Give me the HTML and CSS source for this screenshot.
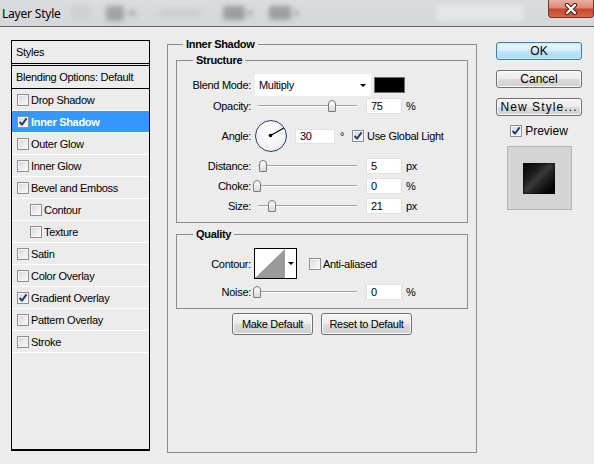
FILE: index.html
```html
<!DOCTYPE html>
<html>
<head>
<meta charset="utf-8">
<title>Layer Style</title>
<link rel="stylesheet" href="styles.css">
</head>
<body>
<div class="titlebar">
  <span class="title">Layer Style</span>
  <span class="blob b1"></span>
  <span class="blob b2"></span>
  <span class="blob b3"></span>
  <span class="blob b4"></span>
  <span class="blob b5"></span>
  <span class="blob b6"></span>
  <span class="blob b7"></span>
  <span class="blob b8"></span>
  <span class="blob b9"></span>
  <span class="close">
    <svg width="16" height="12" viewBox="0 0 16 12"><path d="M4 2 L12 10 M12 2 L4 10" stroke="#4a1c12" stroke-width="4.4" stroke-linecap="round"/><path d="M4 2 L12 10 M12 2 L4 10" stroke="#ffffff" stroke-width="2.4" stroke-linecap="round"/></svg>
  </span>
</div>

<div class="dialog">
  <div class="styles-panel">
    <div class="styles-head">Styles</div>
    <div class="styles-blend">Blending Options: Default</div>
    <ul class="style-list">
      <li class="style-item"><span class="cb"></span>Drop Shadow</li>
      <li class="style-item selected"><span class="cb"><svg class="tick" viewBox="0 0 10 10"><path d="M1.6 5 L4 7.6 L8.6 1.4" /></svg></span>Inner Shadow</li>
      <li class="style-item"><span class="cb"></span>Outer Glow</li>
      <li class="style-item"><span class="cb"></span>Inner Glow</li>
      <li class="style-item"><span class="cb"></span>Bevel and Emboss</li>
      <li class="style-item sub"><span class="cb"></span>Contour</li>
      <li class="style-item sub"><span class="cb"></span>Texture</li>
      <li class="style-item"><span class="cb"></span>Satin</li>
      <li class="style-item"><span class="cb"></span>Color Overlay</li>
      <li class="style-item"><span class="cb"><svg class="tick" viewBox="0 0 10 10"><path d="M1.6 5 L4 7.6 L8.6 1.4" /></svg></span>Gradient Overlay</li>
      <li class="style-item"><span class="cb"></span>Pattern Overlay</li>
      <li class="style-item"><span class="cb"></span>Stroke</li>
    </ul>
  </div>

  <fieldset class="group main-group">
    <legend>Inner Shadow</legend>

    <fieldset class="group sub-group">
      <legend>Structure</legend>

      <div class="row row-blend">
        <span class="lbl">Blend Mode:</span>
        <div class="select">Multiply<span class="caret"></span></div>
        <span class="swatch"></span>
      </div>

      <div class="row row-slider first">
        <span class="lbl">Opacity:</span>
        <div class="slider"><span class="thumb" style="left:75px"></span></div>
        <span class="field">75</span>
        <span class="unit">%</span>
      </div>

      <div class="row row-angle">
        <span class="lbl">Angle:</span>
        <div class="dial">
          <svg width="32" height="32" viewBox="0 0 32 32"><line x1="15.5" y1="15.5" x2="29" y2="8" stroke="#000" stroke-width="1.1"/><circle cx="15.5" cy="15.5" r="1.8" fill="#000"/></svg>
        </div>
        <span class="field field-angle">30</span>
        <span class="deg">°</span>
        <span class="cb"><svg class="tick" viewBox="0 0 10 10"><path d="M1.6 5 L4 7.6 L8.6 1.4" /></svg></span>
        <span class="cb-label">Use Global Light</span>
      </div>

      <div class="row row-slider gap5">
        <span class="lbl">Distance:</span>
        <div class="slider"><span class="thumb" style="left:6px"></span></div>
        <span class="field">5</span>
        <span class="unit">px</span>
      </div>

      <div class="row row-slider gap4">
        <span class="lbl">Choke:</span>
        <div class="slider"><span class="thumb" style="left:0px"></span></div>
        <span class="field">0</span>
        <span class="unit">%</span>
      </div>

      <div class="row row-slider gap4">
        <span class="lbl">Size:</span>
        <div class="slider"><span class="thumb" style="left:15px"></span></div>
        <span class="field">21</span>
        <span class="unit">px</span>
      </div>
    </fieldset>

    <fieldset class="group sub-group quality">
      <legend>Quality</legend>

      <div class="row row-contour">
        <span class="lbl">Contour:</span>
        <div class="contour">
          <svg class="curve" width="30" height="29" viewBox="0 0 30 29"><polygon points="0,29 30,0 30,29" fill="#9a9a9a"/></svg>
          <span class="contour-drop"><span class="caret"></span></span>
        </div>
        <span class="cb cb-aa"></span>
        <span class="cb-label">Anti-aliased</span>
      </div>

      <div class="row row-slider gap5">
        <span class="lbl">Noise:</span>
        <div class="slider"><span class="thumb" style="left:0px"></span></div>
        <span class="field">0</span>
        <span class="unit">%</span>
      </div>
    </fieldset>

    <div class="btn-row">
      <button class="btn btn-make">Make Default</button>
      <button class="btn btn-reset">Reset to Default</button>
    </div>
  </fieldset>

  <div class="side">
    <button class="btn btn-side btn-ok">OK</button>
    <button class="btn btn-side">Cancel</button>
    <button class="btn btn-side btn-new">New Style...</button>
    <div class="preview-toggle">
      <span class="cb"><svg class="tick" viewBox="0 0 10 10"><path d="M1.6 5 L4 7.6 L8.6 1.4" /></svg></span>
      <span class="preview-label">Preview</span>
    </div>
    <div class="preview-box"><span class="preview-swatch"></span></div>
  </div>
</div>
</body>
</html>
```

FILE: styles.css
```css
* { box-sizing: border-box; }

html, body { margin: 0; padding: 0; }

body {
  width: 594px;
  height: 464px;
  overflow: hidden;
  background: #ececec;
  font-family: "Liberation Sans", Arial, sans-serif;
  font-size: 11px;
  letter-spacing: -0.3px;
  color: #000;
}

/* ---------- title bar ---------- */
.titlebar {
  height: 27px;
  display: flex;
  align-items: center;
  background: linear-gradient(#d9dde0, #d3d7da);
  border-bottom: 1px solid #606366;
}

.title {
  flex: 0 0 68px;
  padding-left: 2px;
  font-family: "Noto Sans", "Liberation Sans", sans-serif;
  font-size: 12px;
  letter-spacing: -0.2px;
  color: #000;
}

.blob {
  display: block;
  height: 14px;
  border-radius: 3px;
  filter: blur(2.5px);
  background: #c7cbce;
}
.b1 { margin-left: 4px; width: 18px; background: #ccd0d3; }
.b2 { margin-left: 16px; width: 18px; height: 15px; background: #9fa3a6; }
.b3 { margin-left: 4px; width: 8px; height: 6px; background: #a9adb0; }
.b4 { margin-left: 24px; width: 40px; height: 8px; background: #c9cdd0; }
.b5 { margin-left: 23px; width: 22px; background: #9a9ea1; }
.b6 { margin-left: 2px; width: 6px; height: 6px; background: #a8acaf; }
.b7 { margin-left: 16px; width: 22px; background: #9a9ea1; }
.b8 { margin-left: 2px; width: 6px; height: 6px; background: #a8acaf; }
.b9 { margin-left: 137px; width: 88px; height: 17px; background: #e3e5e7; }

.close {
  margin-left: auto;
  align-self: flex-start;
  width: 46px;
  height: 18px;
  display: flex;
  align-items: center;
  justify-content: center;
  border: 1px solid #7b3426;
  border-top: none;
  border-radius: 0 0 4px 4px;
  background: linear-gradient(#eab0a2 0%, #de8a76 45%, #c9452b 55%, #d4674c 100%);
}

/* ---------- dialog ---------- */
.dialog {
  display: flex;
  align-items: flex-start;
}

/* styles list */
.styles-panel {
  margin: 13px 0 0 11px;
  width: 139px;
  height: 411px;
  border: 1px solid #000;
  border-bottom-width: 2px;
  background: #ececec;
}

.styles-head {
  height: 25px;
  line-height: 22px;
  padding-left: 4px;
  border-bottom: 3px double #000;
}

.styles-blend {
  height: 23px;
  line-height: 22px;
  padding-left: 4px;
  border-bottom: 1px solid #000;
}

.style-list {
  list-style: none;
  margin: 0;
  padding: 0;
}

.style-item {
  height: 22px;
  display: flex;
  align-items: center;
  padding-left: 5px;
  border-bottom: 1px solid #fff;
}
.style-item .cb { margin-right: 2px; }
.style-item.sub { padding-left: 18px; }
.style-item.selected {
  background: #3399ff;
  color: #fff;
  font-weight: bold;
}

/* checkbox */
.cb {
  flex: none;
  width: 12px;
  height: 12px;
  display: inline-flex;
  align-items: center;
  justify-content: center;
  border: 1px solid #8e8f8f;
  background: linear-gradient(135deg, #d2d4d7 0%, #eeeeee 60%, #fafafa 100%);
  box-shadow: inset 0 0 0 1px #f6f6f6;
}
.tick { width: 10px; height: 10px; }
.tick path {
  fill: none;
  stroke: #23357a;
  stroke-width: 1.9;
}

/* group boxes */
.group {
  margin: 0;
  padding: 0;
  min-width: 0;
  border: 1px solid #8c8c8c;
}
.group > legend {
  margin-left: 15px;
  padding: 0 3px;
  line-height: 13px;
  font-weight: bold;
}

.main-group {
  margin: 11px 0 0 17px;
  width: 310px;
  height: 415px;
}

.sub-group {
  margin: 3px 0 0 8px;
  width: 292px;
  padding: 7px 0 8px 0;
}
.sub-group > legend { margin-left: 16px; }
.quality { margin-top: 5px; }

.row {
  display: flex;
  align-items: center;
}
.lbl {
  flex: none;
  width: 74px;
  text-align: right;
}

.row-blend { height: 22px; }
.select {
  margin-left: 4px;
  width: 116px;
  height: 22px;
  display: flex;
  align-items: center;
  padding-left: 4px;
  background: #fff;
}
.caret {
  display: block;
  width: 0;
  height: 0;
  border-left: 3px solid transparent;
  border-right: 3px solid transparent;
  border-top: 3px solid #000;
}
.select .caret { margin-left: auto; margin-right: 5px; }

.swatch {
  margin-left: 3px;
  width: 31px;
  height: 16px;
  background: #000;
  border: 1px solid #6f6f6f;
}

.row-slider { height: 16px; }
.row-slider.first { margin-top: 2px; }
.row-slider.gap5 { margin-top: 5px; }
.row-slider.gap4 { margin-top: 4px; }

.slider {
  position: relative;
  flex: none;
  margin-left: 2px;
  width: 106px;
  height: 16px;
}
.slider::before {
  content: "";
  position: absolute;
  left: 5px;
  right: 2px;
  top: 7px;
  height: 1px;
  background: #a3a3a3;
  box-shadow: 0 1px 0 #fbfbfb;
}
.thumb {
  position: absolute;
  top: 2px;
  width: 8px;
  height: 12px;
  border: 1px solid #7a7a7a;
  border-radius: 4px 4px 1px 1px;
  background: linear-gradient(#ffffff, #d9d9d9);
}

.field {
  flex: none;
  margin-left: 7px;
  width: 36px;
  height: 16px;
  display: flex;
  align-items: center;
  padding-left: 4px;
  background: #fff;
  border: 1px solid #e2e2e2;
}
.unit { margin-left: 4px; }

.row-angle { margin-top: 5px; height: 34px; }
.dial {
  flex: none;
  margin-left: 4px;
  width: 32px;
  height: 32px;
  border-radius: 50%;
  border: 1.5px solid #2f3d68;
  background: radial-gradient(circle at 45% 40%, #ffffff 0%, #f3f3f3 60%, #dcdcdc 100%);
  display: flex;
  align-items: center;
  justify-content: center;
  overflow: hidden;
}
.dial svg { flex: none; }
.field-angle { margin-left: 8px; width: 40px; height: 15px; }
.deg { flex: none; width: 12px; margin-left: 5px; }
.cb-label { margin-left: 3px; }

.row-contour { height: 31px; }
.contour {
  flex: none;
  margin-left: 3px;
  width: 43px;
  height: 31px;
  display: flex;
  border: 1px solid #000;
  background: #fff;
}
.curve { display: block; }
.contour-drop {
  flex: 1;
  display: flex;
  align-items: center;
  justify-content: center;
}
.cb-aa { margin-left: 12px; }
.row-contour .cb-label { margin-left: 2px; }

/* buttons */
.btn {
  font-family: inherit;
  font-size: 11px;
  letter-spacing: -0.3px;
  color: #000;
  padding: 0;
  border: 1px solid #707070;
  border-radius: 3px;
  background: linear-gradient(#f4f4f4 0%, #ececec 48%, #dcdcdc 52%, #cfcfcf 100%);
  box-shadow: inset 0 0 0 1px #fbfbfb;
}

.btn-row {
  display: flex;
  justify-content: center;
  gap: 8px;
  margin-top: 4px;
}
.btn-make { width: 81px; height: 22px; }
.btn-reset { width: 91px; height: 22px; }

.side {
  margin: 15px 0 0 19px;
  width: 86px;
  display: flex;
  flex-direction: column;
  align-items: center;
}
.btn-side {
  width: 86px;
  height: 18px;
  font-size: 12px;
  letter-spacing: 0;
  margin-top: 10px;
}
.btn-ok {
  margin-top: 0;
  border-color: #3c7fb1;
  background: linear-gradient(#e8f5fd 0%, #d8effc 48%, #bde4fb 52%, #a9daf6 100%);
  box-shadow: inset 0 0 0 1px #c4ecfc;
}
.btn-new { letter-spacing: 1.1px; }

.preview-toggle {
  margin-top: 8px;
  height: 14px;
  display: flex;
  align-items: center;
}
.preview-label {
  margin-left: 3px;
  font-size: 12px;
  letter-spacing: 0;
}

.preview-box {
  margin-top: 8px;
  width: 65px;
  height: 64px;
  display: flex;
  align-items: center;
  justify-content: center;
  background: #d4d4d4;
  border: 1px solid #b4b4b4;
}
.preview-swatch {
  display: block;
  width: 32px;
  height: 31px;
  background: linear-gradient(135deg, #050505 0%, #1b1b1b 30%, #383838 48%, #222 62%, #050505 85%, #000 100%);
  box-shadow: inset 0 0 3px #000;
}
```
